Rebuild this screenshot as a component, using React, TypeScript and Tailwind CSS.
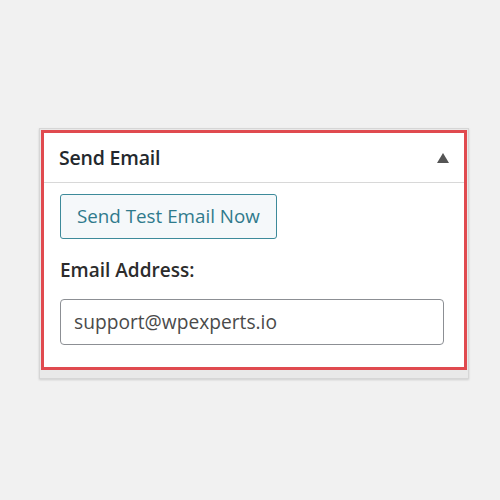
export default function App() {
  return (
    <div className="w-[500px] h-[500px] bg-[#f1f1f1] pt-[128px] pl-[39px]" style={{ fontFamily: '"Open Sans", "Noto Sans", sans-serif' }}>
      <div className="w-[430px] h-[251px] border border-[#d6d6d6] bg-[#e9e9e9] shadow-[0_1px_2px_rgba(0,0,0,0.15)]">
        <div className="ml-[1px] mt-[1px] w-[426px] h-[240px] border-[3px] border-[#e04a4f] bg-white">
          <div className="h-[50px] border-b border-[#d8d8d8] flex items-center justify-between pl-[15px] pr-[15px]">
            <span className="text-[19.5px] font-semibold text-[#23282d] tracking-[-0.2px]">Send Email</span>
            <svg width="12" height="10" viewBox="0 0 12 10"><polygon points="6,0 12,10 0,10" fill="#555" /></svg>
          </div>
          <div className="pl-[16px] pr-[18px] pt-[11px]">
            <button className="h-[45px] px-[16px] rounded-[3px] border border-[#3d8a9a] bg-[#f5f8fa] text-[#2f7a8c] text-[18.8px] leading-none">
              Send Test Email Now
            </button>
            <div className="mt-[17px] text-[19px] font-semibold text-[#2c2c2c] leading-[28px]">Email Address:</div>
            <div className="mt-[15px] h-[46px] w-[384px] rounded-[4px] border border-[#8c8f94] flex items-center px-[13px] text-[19.2px] text-[#4a4a4a]">
              support@wpexperts.io
            </div>
          </div>
        </div>
      </div>
    </div>
  );
}
